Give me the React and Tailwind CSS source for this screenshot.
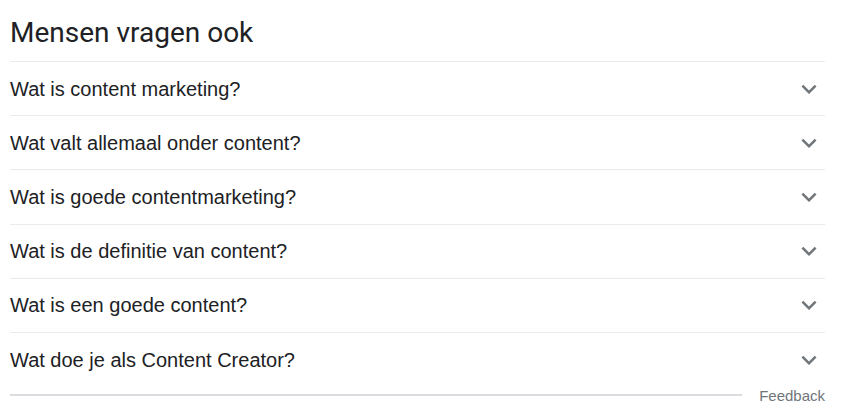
const questions = [
  "Wat is content marketing?",
  "Wat valt allemaal onder content?",
  "Wat is goede contentmarketing?",
  "Wat is de definitie van content?",
  "Wat is een goede content?",
  "Wat doe je als Content Creator?",
];

function Chevron() {
  return (
    <svg viewBox="0 0 24 24" className="h-[30px] w-[30px] fill-[#70757a]">
      <path d="M16.59 8.59L12 13.17 7.41 8.59 6 10l6 6 6-6z" />
    </svg>
  );
}

export default function App() {
  return (
    <div className="min-h-[415px] w-[847px] bg-white px-[10px] font-['Liberation_Sans',Arial,sans-serif] text-[#202124]">
      <div className="w-[815px]">
        <h2 className="flex h-[61px] items-center pt-[5px] font-['Roboto',sans-serif] text-[28px] font-normal leading-none">
          Mensen vragen ook
        </h2>
        <div>
          {questions.map((q) => (
            <div key={q} className="flex h-[54.2px] items-center justify-between border-t border-[#ebebeb]">
              <span className="text-[20px] leading-none">{q}</span>
              <span className="mr-[1px] flex items-center">
                <Chevron />
              </span>
            </div>
          ))}
        </div>
        <div className="flex h-[18px] items-center gap-[17px]">
          <div className="h-[2px] flex-1 bg-[#dadce0]" />
          <span className="text-[15px] leading-none text-[#70757a]">Feedback</span>
        </div>
      </div>
    </div>
  );
}
